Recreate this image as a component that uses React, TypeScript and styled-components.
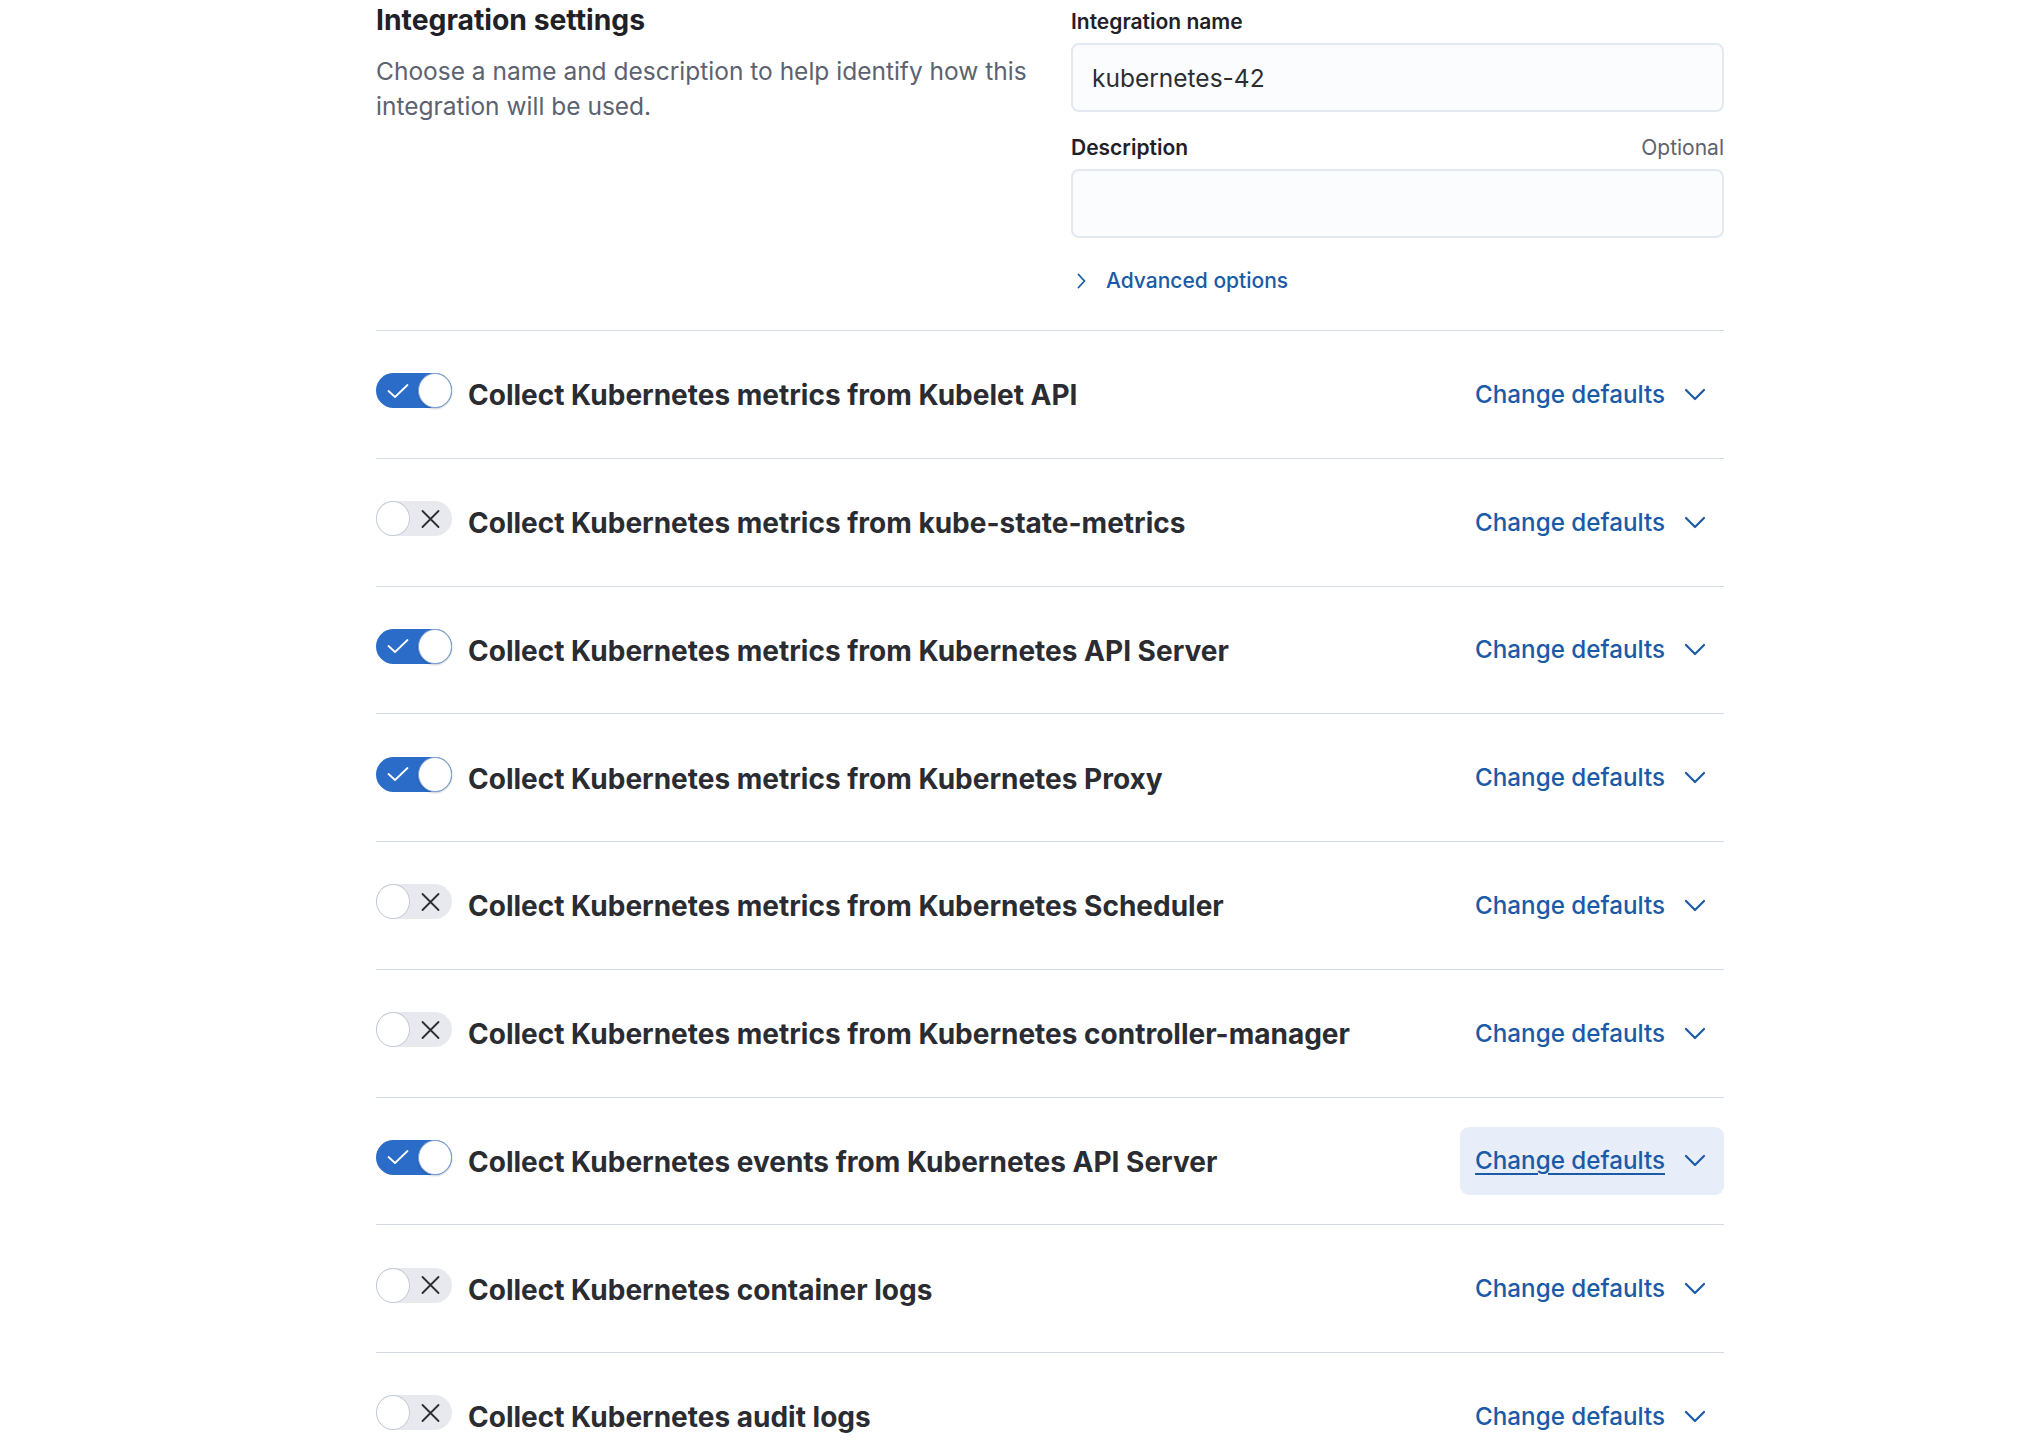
import React from "react";
import styled, { createGlobalStyle } from "styled-components";

const GlobalStyle = createGlobalStyle`
  html, body {
    margin: 0;
    padding: 0;
    background: #ffffff;
  }
  body {
    font-family: Inter, "Noto Sans", sans-serif;
    color: #2b2d33;
    -webkit-font-smoothing: antialiased;
  }
`;

const Page = styled.div`
  width: 1348px;
  margin-left: 376px;
`;

const SettingsSection = styled.section`
  display: grid;
  grid-template-columns: 1fr 653px;
  column-gap: 40px;
  padding-bottom: 35px;
  border-bottom: 1px solid #d3dae6;
`;

const IntroColumn = styled.div`
  padding-top: 5px;
`;

const SectionTitle = styled.h2`
  margin: 0;
  font-size: 28.3px;
  line-height: 30px;
  font-weight: 700;
  color: #1f2127;
`;

const SectionText = styled.p`
  margin: 19px 0 0;
  font-size: 24.5px;
  line-height: 35px;
  color: #5c6270;
`;

const FormColumn = styled.div`
  display: flex;
  flex-direction: column;
  padding-top: 8px;
`;

const FieldRow = styled.div<{ $spaced?: boolean }>`
  display: flex;
  flex-direction: column;
  gap: 9px;
  margin-top: ${(p) => (p.$spaced ? "22px" : "0")};
`;

const LabelLine = styled.div`
  display: flex;
  justify-content: space-between;
  align-items: center;
  height: 26px;
`;

const Label = styled.label`
  font-size: 21px;
  font-weight: 600;
  color: #1f2127;
`;

const OptionalHint = styled.span`
  font-size: 21px;
  color: #5c6270;
`;

const TextInput = styled.input`
  box-sizing: border-box;
  width: 100%;
  height: 69px;
  padding: 0 19px;
  border: 2px solid #e4e8f0;
  border-radius: 8px;
  background: #fbfcfd;
  font-family: inherit;
  font-size: 24.5px;
  color: #2b2d33;
  outline: none;
`;

const AdvancedToggle = styled.button`
  display: flex;
  align-items: center;
  gap: 20px;
  margin-top: 29px;
  padding: 0 0 0 6px;
  border: 0;
  background: none;
  font-family: inherit;
  font-size: 21px;
  font-weight: 500;
  line-height: 28px;
  color: #1b5aa6;
  cursor: pointer;
`;

const StreamRow = styled.div`
  box-sizing: border-box;
  height: 127.75px;
  display: flex;
  align-items: center;
  border-bottom: 1px solid #d3dae6;
`;

const SwitchTrack = styled.span<{ $on: boolean }>`
  position: relative;
  flex: none;
  display: flex;
  align-items: center;
  width: 76px;
  height: 35px;
  margin-top: -7px;
  border-radius: 18px;
  background: ${(p) => (p.$on ? "#2a6cc8" : "#e7e9ee")};
`;

const SwitchKnob = styled.span<{ $on: boolean }>`
  position: absolute;
  top: 0;
  left: ${(p) => (p.$on ? "42px" : "0")};
  box-sizing: border-box;
  width: 34px;
  height: 35px;
  border-radius: 50%;
  background: #ffffff;
  border: 1.5px solid ${(p) => (p.$on ? "#7f9fd2" : "#c4cad4")};
  box-shadow: ${(p) => (p.$on ? "0 1px 2px rgba(20, 40, 80, 0.25)" : "none")};
`;

const SwitchIcon = styled.svg<{ $on: boolean }>`
  position: absolute;
  left: ${(p) => (p.$on ? "11px" : "45px")};
  top: 50%;
  transform: translateY(-50%);
`;

const StreamTitle = styled.span`
  flex: 1;
  margin-left: 16px;
  padding-top: 2px;
  font-size: 28px;
  font-weight: 700;
  color: #2a2c32;
`;

const DefaultsButton = styled.button<{ $active?: boolean }>`
  display: flex;
  align-items: center;
  gap: 19px;
  height: 68px;
  padding: 0 18px 0 15px;
  border: 0;
  border-radius: 9px;
  background: ${(p) => (p.$active ? "#e8eef9" : "transparent")};
  font-family: inherit;
  font-size: 24.2px;
  font-weight: 500;
  color: #1b5aa6;
  cursor: pointer;
  span {
    text-decoration: ${(p) => (p.$active ? "underline" : "none")};
    text-underline-offset: 4px;
    text-decoration-thickness: 2px;
  }
`;

const ChevronDown = () => (
  <svg width="22" height="13" viewBox="0 0 22 13" fill="none">
    <path d="M2 2l9 9 9-9" stroke="#1b5aa6" strokeWidth="2.2" strokeLinecap="round" strokeLinejoin="round" />
  </svg>
);

const ChevronRight = () => (
  <svg width="9" height="16" viewBox="0 0 9 16" fill="none">
    <path d="M1.5 1.5l6 6.5-6 6.5" stroke="#1b5aa6" strokeWidth="1.8" strokeLinecap="round" strokeLinejoin="round" />
  </svg>
);

const Switch = ({ on }: { on: boolean }) => (
  <SwitchTrack $on={on} role="switch" aria-checked={on}>
    {on ? (
      <SwitchIcon $on width="22" height="15" viewBox="0 0 22 15" fill="none">
        <path d="M1.5 7.5l6.5 6L20.5 1.5" stroke="#ffffff" strokeWidth="1.8" strokeLinecap="round" strokeLinejoin="round" />
      </SwitchIcon>
    ) : (
      <SwitchIcon $on={false} width="19" height="19" viewBox="0 0 19 19" fill="none">
        <path d="M1.5 1.5l16 16M17.5 1.5l-16 16" stroke="#2b2d33" strokeWidth="1.8" strokeLinecap="round" />
      </SwitchIcon>
    )}
    <SwitchKnob $on={on} />
  </SwitchTrack>
);

const streams = [
  { title: "Collect Kubernetes metrics from Kubelet API", on: true },
  { title: "Collect Kubernetes metrics from kube-state-metrics", on: false },
  { title: "Collect Kubernetes metrics from Kubernetes API Server", on: true },
  { title: "Collect Kubernetes metrics from Kubernetes Proxy", on: true },
  { title: "Collect Kubernetes metrics from Kubernetes Scheduler", on: false },
  { title: "Collect Kubernetes metrics from Kubernetes controller-manager", on: false },
  { title: "Collect Kubernetes events from Kubernetes API Server", on: true, active: true },
  { title: "Collect Kubernetes container logs", on: false },
  { title: "Collect Kubernetes audit logs", on: false },
];

export default function App() {
  return (
    <>
      <GlobalStyle />
      <Page>
        <SettingsSection>
          <IntroColumn>
            <SectionTitle>Integration settings</SectionTitle>
            <SectionText>
              Choose a name and description to help identify how this integration will be used.
            </SectionText>
          </IntroColumn>
          <FormColumn>
            <FieldRow>
              <LabelLine>
                <Label>Integration name</Label>
              </LabelLine>
              <TextInput defaultValue="kubernetes-42" />
            </FieldRow>
            <FieldRow $spaced>
              <LabelLine>
                <Label>Description</Label>
                <OptionalHint>Optional</OptionalHint>
              </LabelLine>
              <TextInput defaultValue="" />
            </FieldRow>
            <AdvancedToggle>
              <ChevronRight />
              Advanced options
            </AdvancedToggle>
          </FormColumn>
        </SettingsSection>
        {streams.map((s) => (
          <StreamRow key={s.title}>
            <Switch on={s.on} />
            <StreamTitle>{s.title}</StreamTitle>
            <DefaultsButton $active={s.active}>
              <span>Change defaults</span>
              <ChevronDown />
            </DefaultsButton>
          </StreamRow>
        ))}
      </Page>
    </>
  );
}
